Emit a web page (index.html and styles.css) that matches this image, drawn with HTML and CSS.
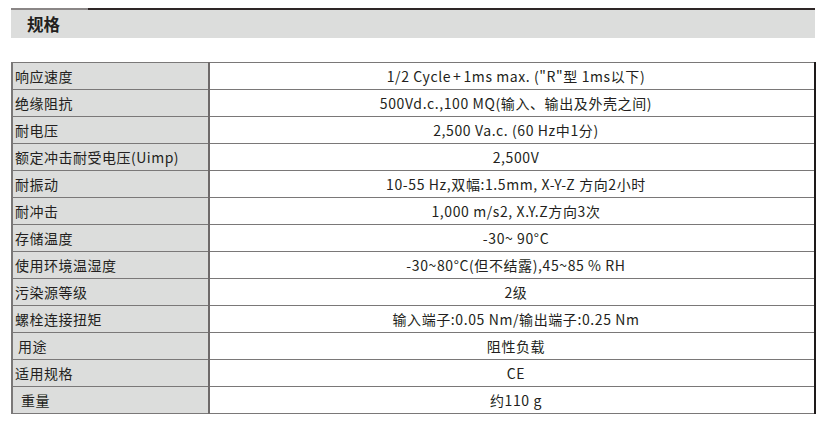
FILE: index.html
```html
<!DOCTYPE html>
<html lang="zh-CN">
<head>
<meta charset="utf-8">
<title>规格</title>
<link rel="stylesheet" href="styles.css">
</head>
<body>
<section class="spec">
  <h2 class="spec-title">规格</h2>
  <table class="spec-table">
    <tbody>
      <tr><th>响应速度</th><td>1/2 Cycle<span class="op">+</span>1ms max. ("R"型 1ms以下)</td></tr>
      <tr><th>绝缘阻抗</th><td>500Vd.c.,100 MQ(输入、输出及外壳之间)</td></tr>
      <tr><th>耐电压</th><td>2,500 Va.c. (60 Hz中1分)</td></tr>
      <tr><th>额定冲击耐受电压(Uimp)</th><td>2,500V</td></tr>
      <tr><th>耐振动</th><td>10-55 Hz,双幅:1.5mm, X-Y-Z 方向2小时</td></tr>
      <tr><th>耐冲击</th><td>1,000 m/s2, X.Y.Z方向3次</td></tr>
      <tr><th>存储温度</th><td>-30~ 90°C</td></tr>
      <tr><th>使用环境温湿度</th><td>-30~80°C(但不结露),45~85 % RH</td></tr>
      <tr><th>污染源等级</th><td>2级</td></tr>
      <tr><th>螺栓连接扭矩</th><td>输入端子:0.05 Nm/输出端子:0.25 Nm</td></tr>
      <tr><th class="indent-sm">用途</th><td>阻性负载</td></tr>
      <tr><th>适用规格</th><td>CE</td></tr>
      <tr><th class="indent-md">重量</th><td>约110 g</td></tr>
    </tbody>
  </table>
</section>
</body>
</html>
```

FILE: styles.css
```css
html, body {
  margin: 0;
  padding: 0;
  background: #ffffff;
}

body {
  font-family: "Noto Sans CJK SC", "Noto Sans", sans-serif;
  color: #231f20;
}

.spec {
  padding: 8px 8px 0 11px;
}

.spec-title {
  margin: 0;
  width: 804px;
  height: 30px;
  box-sizing: border-box;
  padding: 0 0 0 16px;
  background: #dcdddc;
  border-top: 2px solid #2e2626;
  font-size: 16.5px;
  font-weight: 700;
  line-height: 28px;
  color: #231f20;
  position: relative;
}

.spec-title::before {
  content: "";
  position: absolute;
  left: 0;
  top: -2px;
  width: 77px;
  height: 2px;
  background: #8a8686;
}

.spec-table {
  margin-top: 24px;
  width: 805px;
  border-collapse: collapse;
  table-layout: fixed;
  font-size: 14px;
}

.spec-table th,
.spec-table td {
  height: 26px;
  padding: 0;
  border-top: 1px solid #7a7878;
  border-bottom: 1px solid #7a7878;
  line-height: 26px;
  font-weight: 400;
  white-space: nowrap;
}

.spec-table th {
  width: 193px;
  text-align: left;
  padding-left: 2px;
  background: #dcdddc;
  border-left: 2px solid #7a7878;
  border-right: 2px solid #6e6a6a;
  letter-spacing: 0.5px;
}

.spec-table td {
  text-align: center;
  padding-left: 8px;
  letter-spacing: 0.6px;
  border-right: 2px solid #1e1a1a;
}

.spec-table td .op {
  padding: 0 2px;
}

.spec-table th.indent-sm {
  padding-left: 5px;
}

.spec-table th.indent-md {
  padding-left: 8px;
}
```
